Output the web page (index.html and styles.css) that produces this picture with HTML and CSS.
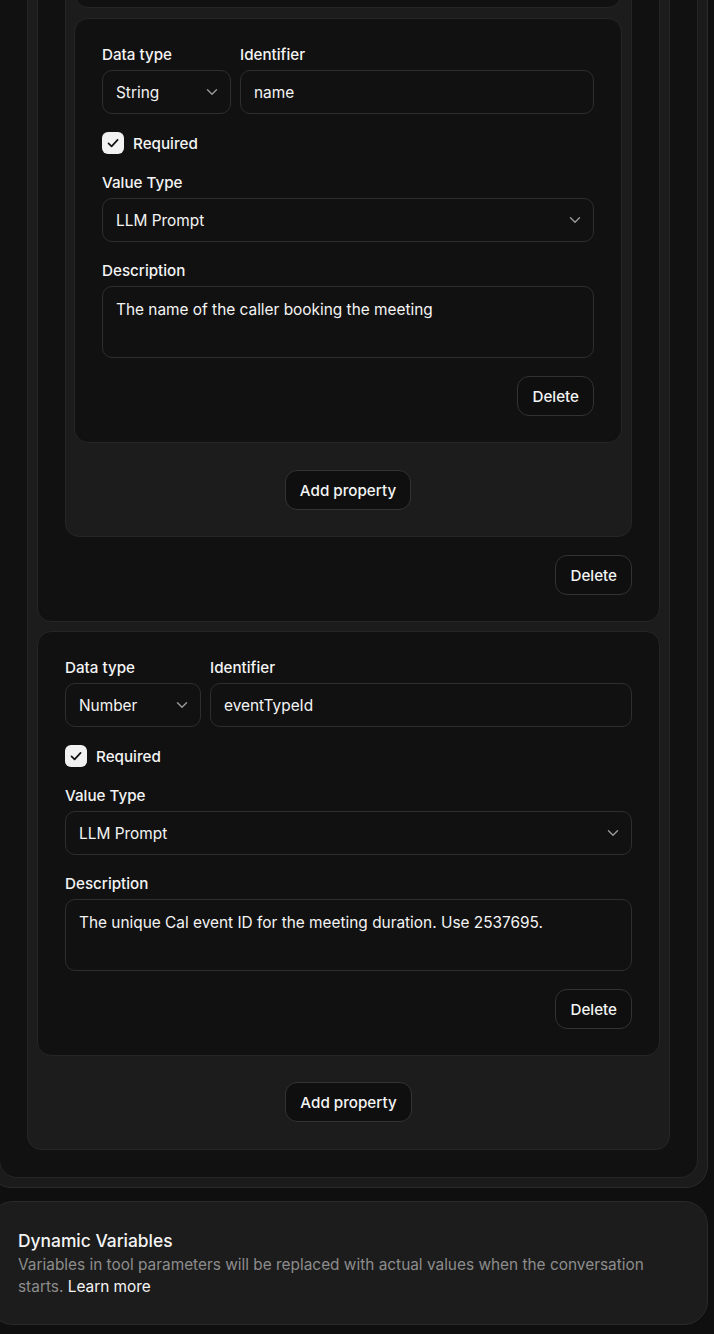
FILE: index.html
```html
<!DOCTYPE html>
<html lang="en">
<head>
    <meta charset="UTF-8">
    <meta name="viewport" content="width=device-width, initial-scale=1.0">
    <title>Tool parameters</title>
    <link rel="stylesheet" href="styles.css">
</head>
<body>
    <div class="page">
        <div class="outer-panel">
            <div class="params-panel">
                <div class="props-list">

                    <!-- object property with nested properties -->
                    <div class="prop-card">
                        <div class="nested-list">
                            <div class="prop-card">
                                <div class="actions-row">
                                    <button class="btn" type="button">Delete</button>
                                </div>
                            </div>

                            <div class="prop-card">
                                <div class="field-row">
                                    <div class="field type-field">
                                        <label>Data type</label>
                                        <button class="select" type="button">
                                            <span>String</span>
                                            <svg class="chevron" viewBox="0 0 12 8" width="12" height="8"><path d="M1.5 1.8 6 6.2l4.5-4.4" /></svg>
                                        </button>
                                    </div>
                                    <div class="field grow">
                                        <label for="id-name">Identifier</label>
                                        <input class="text-input" id="id-name" type="text" value="name">
                                    </div>
                                </div>

                                <label class="check-row">
                                    <span class="checkbox">
                                        <svg viewBox="0 0 16 16" width="16" height="16"><path d="M3.5 8.3 6.6 11.3 12.6 4.8" /></svg>
                                    </span>
                                    Required
                                </label>

                                <div class="field">
                                    <label>Value Type</label>
                                    <button class="select" type="button">
                                        <span>LLM Prompt</span>
                                        <svg class="chevron" viewBox="0 0 12 8" width="12" height="8"><path d="M1.5 1.8 6 6.2l4.5-4.4" /></svg>
                                    </button>
                                </div>

                                <div class="field">
                                    <label for="desc-name">Description</label>
                                    <textarea class="text-area" id="desc-name">The name of the caller booking the meeting</textarea>
                                </div>

                                <div class="actions-row">
                                    <button class="btn" type="button">Delete</button>
                                </div>
                            </div>

                            <div class="add-row">
                                <button class="btn" type="button">Add property</button>
                            </div>
                        </div>

                        <div class="actions-row">
                            <button class="btn" type="button">Delete</button>
                        </div>
                    </div>

                    <div class="prop-card">
                        <div class="field-row">
                            <div class="field type-field wide">
                                <label>Data type</label>
                                <button class="select" type="button">
                                    <span>Number</span>
                                    <svg class="chevron" viewBox="0 0 12 8" width="12" height="8"><path d="M1.5 1.8 6 6.2l4.5-4.4" /></svg>
                                </button>
                            </div>
                            <div class="field grow">
                                <label for="id-event">Identifier</label>
                                <input class="text-input" id="id-event" type="text" value="eventTypeId">
                            </div>
                        </div>

                        <label class="check-row">
                            <span class="checkbox">
                                <svg viewBox="0 0 16 16" width="16" height="16"><path d="M3.5 8.3 6.6 11.3 12.6 4.8" /></svg>
                            </span>
                            Required
                        </label>

                        <div class="field">
                            <label>Value Type</label>
                            <button class="select" type="button">
                                <span>LLM Prompt</span>
                                <svg class="chevron" viewBox="0 0 12 8" width="12" height="8"><path d="M1.5 1.8 6 6.2l4.5-4.4" /></svg>
                            </button>
                        </div>

                        <div class="field">
                            <label for="desc-event">Description</label>
                            <textarea class="text-area" id="desc-event">The unique Cal event ID for the meeting duration. Use 2537695.</textarea>
                        </div>

                        <div class="actions-row">
                            <button class="btn" type="button">Delete</button>
                        </div>
                    </div>

                    <div class="add-row">
                        <button class="btn" type="button">Add property</button>
                    </div>
                </div>
            </div>
        </div>

        <div class="info-card">
            <h3>Dynamic Variables</h3>
            <p>Variables in tool parameters will be replaced with actual values when the conversation starts. <a href="#">Learn more</a></p>
        </div>
    </div>
</body>
</html>
```

FILE: styles.css
```css
* {
    box-sizing: border-box;
}

body {
    margin: 0;
    background: #0f0f0f;
    color: #f4f4f4;
    font-family: Inter, "Noto Sans", Arial, sans-serif;
    font-size: 15.2px;
    overflow: hidden;
}

.page {
    width: 719px;
    margin: -169px 0 0 -11px;
    padding-bottom: 10px;
}

.outer-panel {
    background: #1b1b1b;
    border: 1px solid #2a2a2a;
    border-radius: 22px;
    padding: 9px;
}

.params-panel {
    background: #111111;
    border: 1px solid #262626;
    border-radius: 18px;
    padding: 27px;
}

.props-list,
.nested-list {
    display: flex;
    flex-direction: column;
    gap: 9px;
    background: #1c1c1c;
    border: 1px solid #262626;
    border-radius: 14px;
    padding: 9px 9px 10px;
}

.nested-list {
    gap: 10px;
    padding: 9px 9px 9px 8px;
}

.prop-card {
    display: flex;
    flex-direction: column;
    gap: 18px;
    background: #111111;
    border: 1px solid #262626;
    border-radius: 14px;
    padding: 25px 27px 26px;
}

.field-row {
    display: flex;
    gap: 9px;
}

.field {
    display: flex;
    flex-direction: column;
    gap: 4px;
}

.field label {
    font-weight: 500;
    line-height: 22px;
}

.grow {
    flex: 1;
}

.type-field {
    width: 129px;
}

.type-field.wide {
    width: 136px;
}

.select,
.text-input,
.text-area {
    font: inherit;
    font-size: 15.4px;
    color: #f4f4f4;
    background: #111111;
    border: 1px solid #2e2e2e;
    border-radius: 10px;
}

.select {
    display: flex;
    align-items: center;
    justify-content: space-between;
    height: 44px;
    padding: 0 12px 0 13px;
    text-align: left;
}

.chevron {
    fill: none;
    stroke: #9a9a9a;
    stroke-width: 1.4;
    stroke-linecap: round;
    stroke-linejoin: round;
}

.text-input {
    height: 44px;
    padding: 0 13px;
    outline: none;
}

.text-area {
    height: 72px;
    padding: 12px 13px;
    line-height: 22px;
    resize: none;
    outline: none;
}

.check-row {
    display: flex;
    align-items: center;
    gap: 9px;
    height: 22px;
    font-weight: 500;
}

.checkbox {
    display: flex;
    align-items: center;
    justify-content: center;
    width: 22px;
    height: 22px;
    background: #f2f2f2;
    border-radius: 6px;
}

.checkbox svg {
    fill: none;
    stroke: #111111;
    stroke-width: 1.7;
    stroke-linecap: round;
    stroke-linejoin: round;
}

.actions-row {
    display: flex;
    justify-content: flex-end;
}

.add-row {
    display: flex;
    justify-content: center;
    padding: 17px 0;
}

.btn {
    font: inherit;
    font-weight: 500;
    color: #f4f4f4;
    background: #0f0f0f;
    border: 1px solid #333333;
    border-radius: 12px;
    height: 40px;
    padding: 0 14px;
    cursor: pointer;
}

.info-card {
    margin-top: 13px;
    background: #1c1c1c;
    border: 1px solid #2a2a2a;
    border-radius: 24px;
    padding: 26px 28px 26px 28px;
}

.info-card h3 {
    margin: 0;
    font-size: 17.4px;
    font-weight: 500;
    line-height: 26px;
}

.info-card p {
    margin: 0;
    color: #8c8c8c;
    font-size: 15.4px;
    line-height: 22px;
}

.info-card a {
    color: #f4f4f4;
    text-decoration: none;
}
```
